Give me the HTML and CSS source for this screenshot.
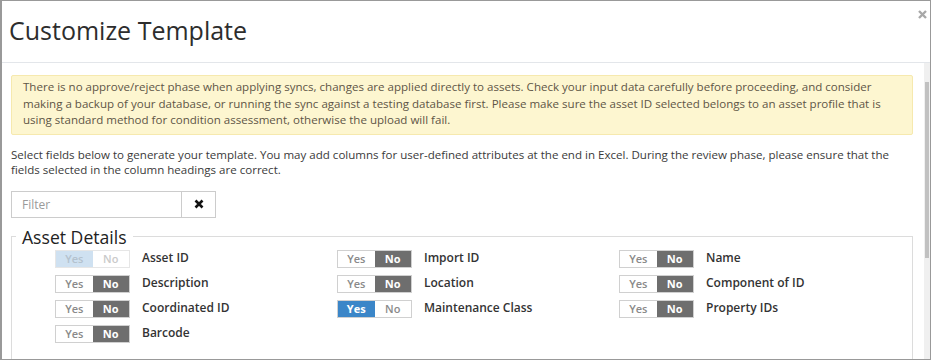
FILE: index.html
```html
<!DOCTYPE html>
<html lang="en">
<head>
  <meta charset="UTF-8" />
  <title>Customize Template</title>
  <link rel="stylesheet" href="styles.css">
</head>
<body>
  <div class="modal">
    <div class="modal-header">
      <h2>Customize Template</h2>
      <span class="close">
        <svg width="9" height="9" viewBox="0 0 9 9"><path d="M1 1L8 8M8 1L1 8" stroke="#a8a8a8" stroke-width="2.4"/></svg>
      </span>
    </div>

    <div class="modal-main">
      <div class="modal-body">
        <div class="alert">
          There is no approve/reject phase when applying syncs, changes are applied directly to assets. Check your input data carefully before proceeding, and consider making a backup of your database, or running the sync against a testing database first. Please make sure the asset ID selected belongs to an asset profile that is using standard method for condition assessment, otherwise the upload will fail.
        </div>

        <p class="intro">Select fields below to generate your template. You may add columns for user-defined attributes at the end in Excel. During the review phase, please ensure that the fields selected in the column headings are correct.</p>

        <div class="filter">
          <input type="text" placeholder="Filter">
          <button class="filter-clear">
            <svg width="10" height="10" viewBox="0 0 10 10"><path d="M1.5 1.5L8.5 8.5M8.5 1.5L1.5 8.5" stroke="#111" stroke-width="2.6"/></svg>
          </button>
        </div>

        <fieldset class="group">
          <legend>Asset Details</legend>
          <div class="fields">
            <div class="field">
              <span class="toggle disabled"><span class="yes">Yes</span><span class="no">No</span></span>
              <span class="label">Asset ID</span>
            </div>
            <div class="field">
              <span class="toggle"><span class="yes">Yes</span><span class="no on">No</span></span>
              <span class="label">Import ID</span>
            </div>
            <div class="field">
              <span class="toggle"><span class="yes">Yes</span><span class="no on">No</span></span>
              <span class="label">Name</span>
            </div>

            <div class="field">
              <span class="toggle"><span class="yes">Yes</span><span class="no on">No</span></span>
              <span class="label">Description</span>
            </div>
            <div class="field">
              <span class="toggle"><span class="yes">Yes</span><span class="no on">No</span></span>
              <span class="label">Location</span>
            </div>
            <div class="field">
              <span class="toggle"><span class="yes">Yes</span><span class="no on">No</span></span>
              <span class="label">Component of ID</span>
            </div>

            <div class="field">
              <span class="toggle"><span class="yes">Yes</span><span class="no on">No</span></span>
              <span class="label">Coordinated ID</span>
            </div>
            <div class="field">
              <span class="toggle"><span class="yes on">Yes</span><span class="no">No</span></span>
              <span class="label">Maintenance Class</span>
            </div>
            <div class="field">
              <span class="toggle"><span class="yes">Yes</span><span class="no on">No</span></span>
              <span class="label">Property IDs</span>
            </div>

            <div class="field">
              <span class="toggle"><span class="yes">Yes</span><span class="no on">No</span></span>
              <span class="label">Barcode</span>
            </div>
          </div>
        </fieldset>
      </div>

      <div class="scrollbar"><div class="thumb"></div></div>
    </div>
  </div>
</body>
</html>
```

FILE: styles.css
```css
* {
  box-sizing: border-box;
  margin: 0;
  padding: 0;
}

body {
  font-family: 'Open Sans', 'Liberation Sans', sans-serif;
  color: #333;
  background: #fff;
}

.modal {
  width: 931px;
  height: 360px;
  border: 1px solid #999;
  border-left-width: 2px;
  display: flex;
  flex-direction: column;
  overflow: hidden;
}

.modal-header {
  height: 62px;
  flex-shrink: 0;
  border-bottom: 1px solid #e3e6ea;
  padding: 13px 0 0 7px;
  position: relative;
}

.modal-header h2 {
  font-size: 25px;
  font-weight: 400;
  line-height: 32px;
  color: #2d2d2d;
}

/* close cross sits over the header corner */
.close {
  position: absolute;
  top: 9px;
  right: 3px;
  line-height: 0;
}

.modal-main {
  flex: 1;
  display: flex;
  overflow: hidden;
}

.modal-body {
  flex: 1;
  padding: 12px 11px 0 9px;
  overflow: hidden;
}

.scrollbar {
  width: 6px;
  background: #f0f0f0;
  padding-top: 19px;
}

.thumb {
  width: 4px;
  margin-left: 1px;
  height: 176px;
  background: #c1c1c1;
}

.alert {
  background: #fdf6d0;
  border: 1px solid #f6e9ae;
  border-radius: 2px;
  padding: 3px 11px 5px;
  font-size: 11.55px;
  line-height: 16.5px;
  color: #5e5546;
}

.intro {
  margin-top: 12px;
  font-size: 11.55px;
  line-height: 15.5px;
  color: #3a3a3a;
}

.filter {
  margin-top: 13px;
  display: flex;
  width: 205px;
  height: 27px;
}

.filter input {
  width: 170px;
  border: 1px solid #ccc;
  border-right: none;
  padding: 0 10px;
  font-family: inherit;
  font-size: 12px;
  color: #333;
}

.filter input::placeholder {
  color: #9a9a9a;
}

.filter-clear {
  width: 35px;
  border: 1px solid #ccc;
  background: #fff;
  display: flex;
  align-items: center;
  justify-content: center;
}

.group {
  margin-top: 9px;
  border: 1px solid #dcdcdc;
  border-bottom: none;
  padding: 0 4px 20px;
}

.group legend {
  font-size: 17.6px;
  line-height: 20px;
  padding: 0 6px;
  color: #222;
}

.fields {
  display: grid;
  grid-template-columns: repeat(3, 282px);
  row-gap: 7px;
  padding: 3px 0 0 39px;
}

.field {
  display: flex;
  align-items: center;
  gap: 12px;
  height: 18px;
}

.toggle {
  display: flex;
  width: 75px;
  height: 18px;
  border: 1px solid #d0d0d0;
  font-size: 11px;
  font-weight: 600;
  line-height: 16px;
  text-align: center;
}

.toggle span {
  flex: 1;
  color: #8a8a8a;
  background: #fff;
}

.toggle .no.on {
  background: #6e6e6e;
  color: #fff;
  font-weight: 700;
}

.toggle .yes.on {
  background: #3b86c8;
  color: #fff;
  font-weight: 700;
}

.toggle.disabled {
  border-color: #e6e6e6;
}

.toggle.disabled .yes {
  background: #cfe1f1;
  color: #b4c2ce;
}

.toggle.disabled .no {
  color: #cacaca;
}

.label {
  font-size: 12px;
  font-weight: 600;
  color: #333;
  margin-top: -2px;
}
```
